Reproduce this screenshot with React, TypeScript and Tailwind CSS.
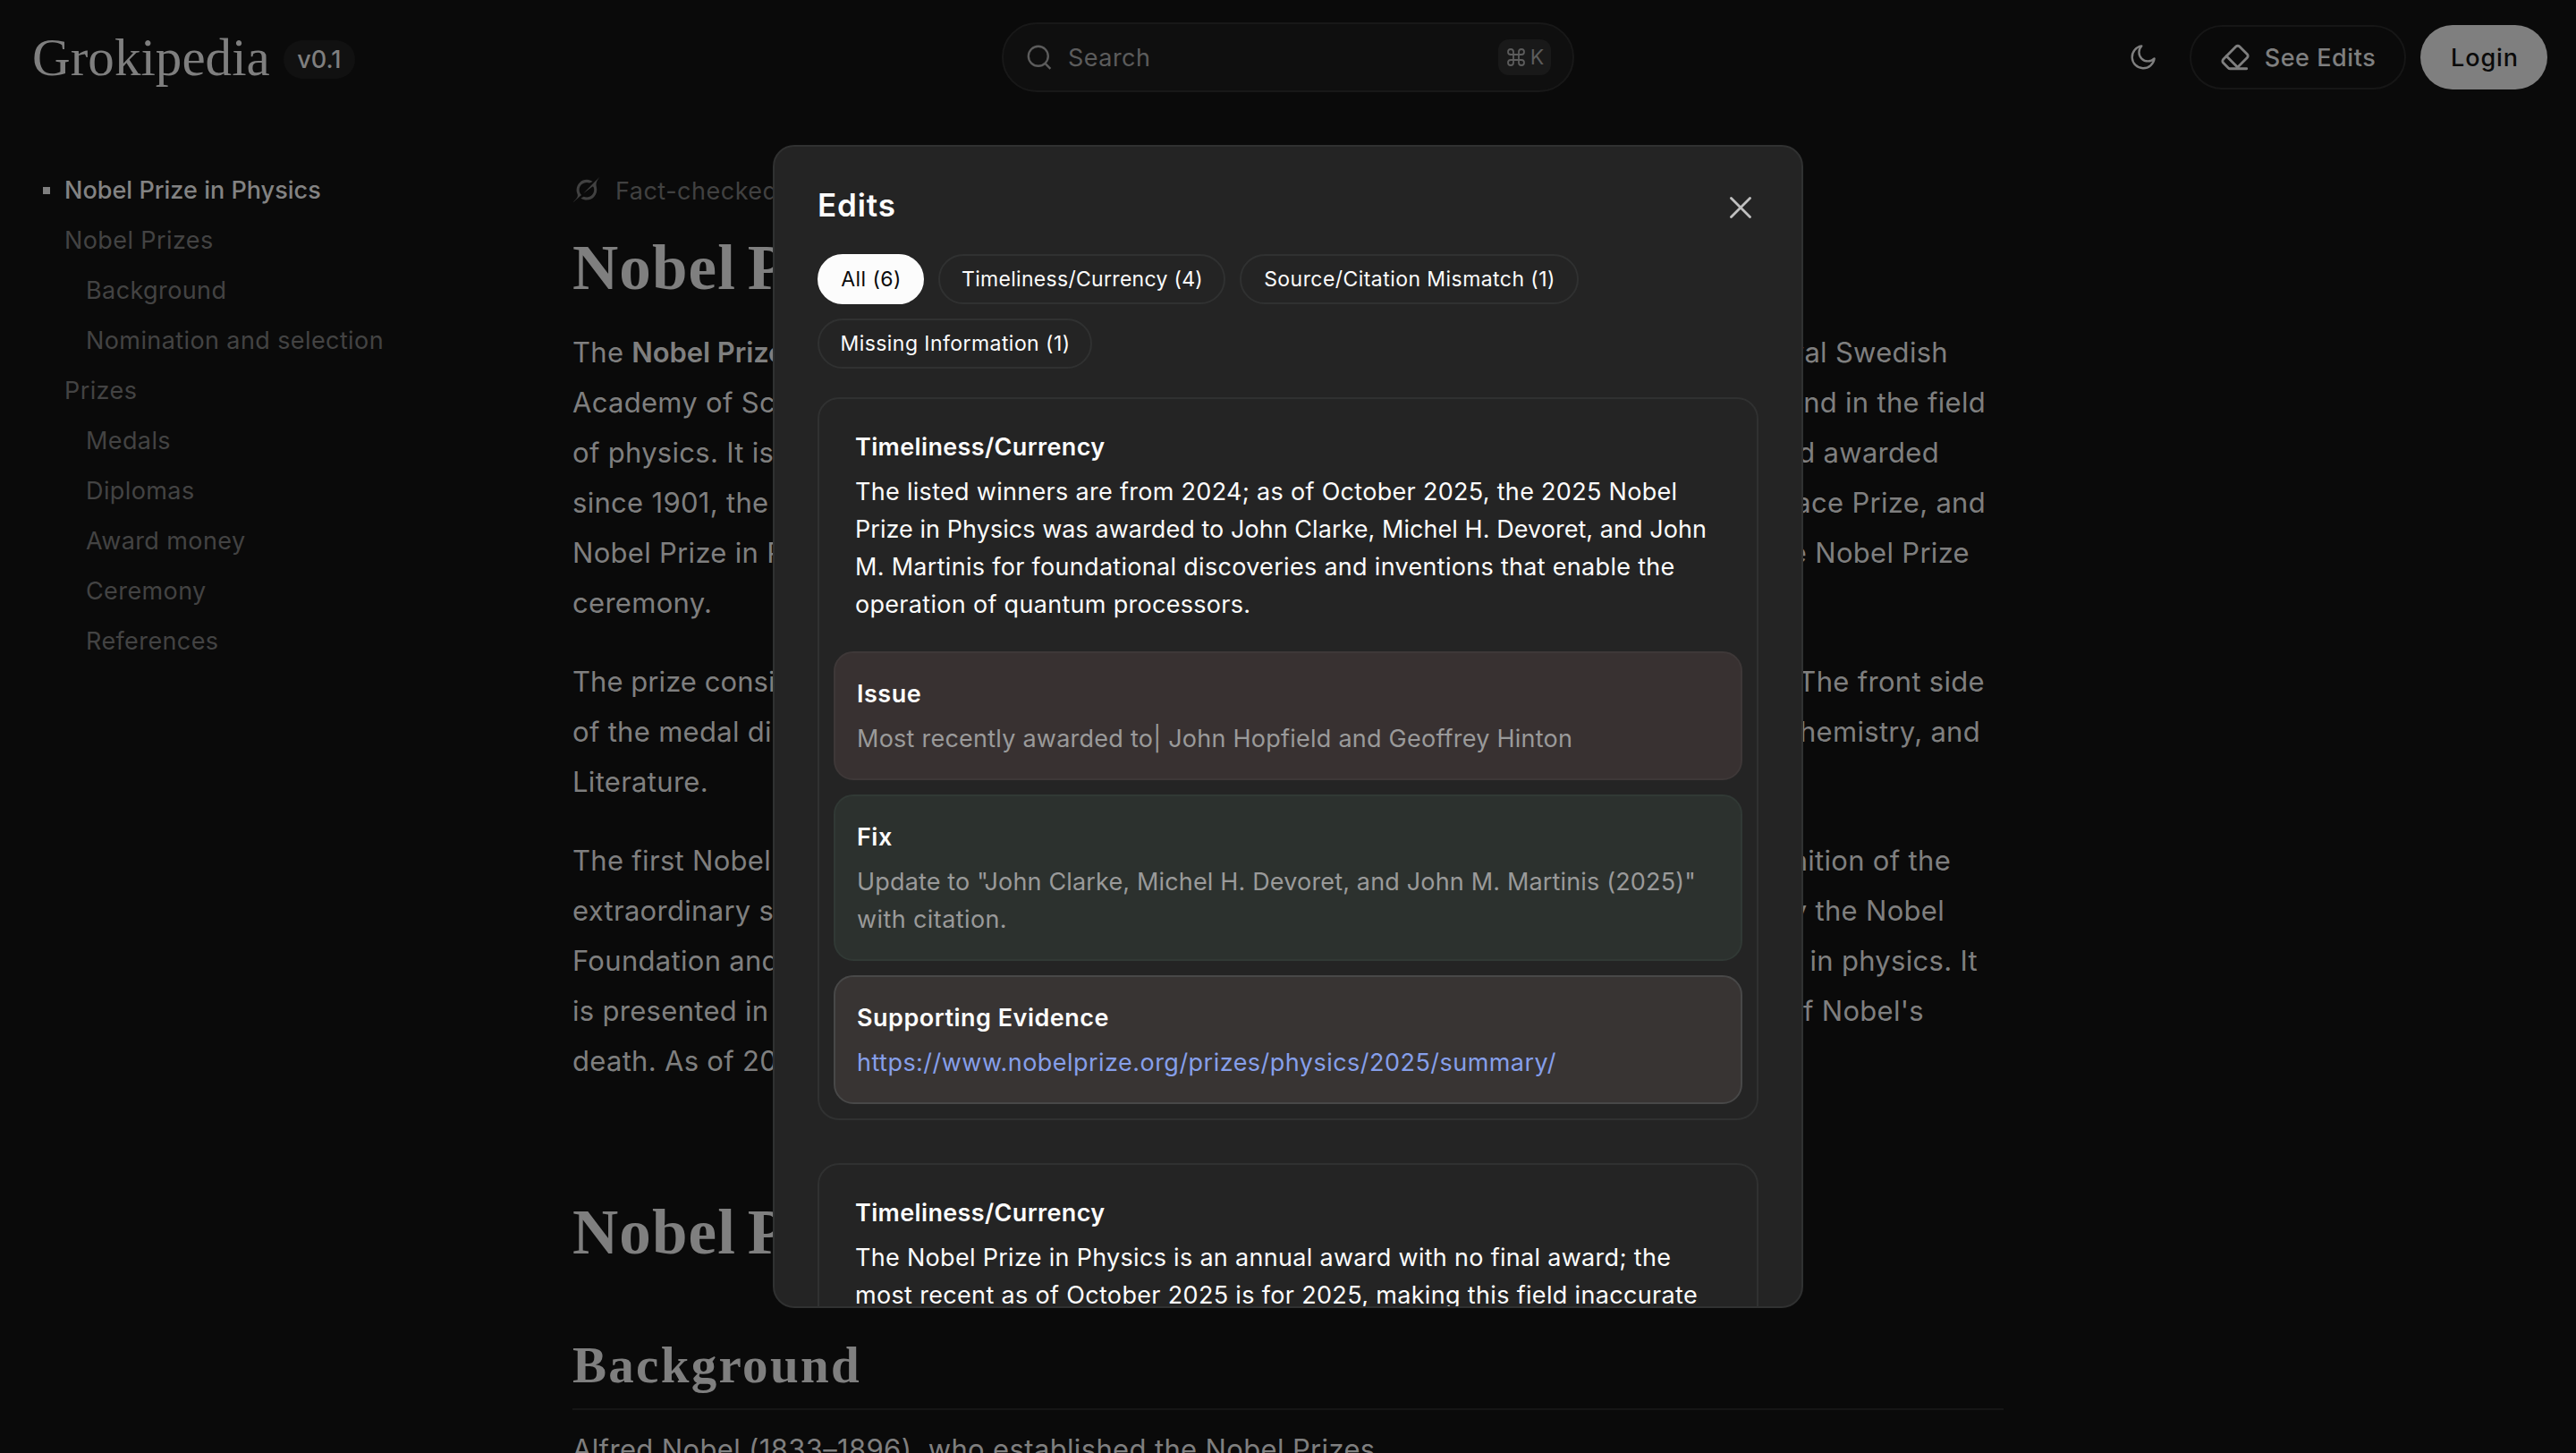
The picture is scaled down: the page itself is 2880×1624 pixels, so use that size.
import React, { useState } from 'react';
import { Command, Eraser } from 'lucide-react';
import clsx from 'clsx';

interface TocItem {
  label: string;
  nested?: boolean;
  active?: boolean;
}

const toc: TocItem[] = [
  { label: 'Nobel Prize in Physics', active: true },
  { label: 'Nobel Prizes' },
  { label: 'Background', nested: true },
  { label: 'Nomination and selection', nested: true },
  { label: 'Prizes' },
  { label: 'Medals', nested: true },
  { label: 'Diplomas', nested: true },
  { label: 'Award money', nested: true },
  { label: 'Ceremony', nested: true },
  { label: 'References', nested: true },
];

const filters = [
  { label: 'All (6)', width: 'w-[119px]' },
  { label: 'Timeliness/Currency (4)', width: 'w-[321px]', tracking: 'tracking-[0.3px]' },
  { label: 'Source/Citation Mismatch (1)', width: 'w-[379px]' },
  { label: 'Missing Information (1)', width: 'w-[307px]' },
];

const SearchIcon = () => (
  <svg className="h-7 w-7 shrink-0" viewBox="0 0 28 28" fill="none" stroke="currentColor" strokeWidth="2.4">
    <circle cx="12.8" cy="12.8" r="11" />
    <path d="M20 20.4 26.4 26.8" />
  </svg>
);

const MoonIcon = () => (
  <svg className="h-7 w-7" viewBox="0 0 28 28" fill="none" stroke="currentColor" strokeWidth="2.4" strokeLinejoin="round">
    <path d="M12.3 1.4A12.5 12.5 0 1 0 26.6 15.4A9.7 9.7 0 0 1 12.3 1.4Z" />
  </svg>
);

const CloseIcon = () => (
  <svg className="h-6 w-6" viewBox="0 0 24 24" fill="none" stroke="currentColor" strokeWidth="2.8" strokeLinecap="round">
    <path d="M1.5 1.5 22.5 22.5M22.5 1.5 1.5 22.5" />
  </svg>
);

const GrokIcon = () => (
  <svg className="h-[30px] w-[31px] shrink-0" viewBox="0 0 34 33" fill="currentColor">
    <path d="M13.237 21.04 24.319 12.85C24.862 12.449 25.638 12.606 25.897 13.229C27.26 16.519 26.651 20.471 23.94 23.185C21.23 25.899 17.458 26.494 14.011 25.139L10.245 26.884C15.646 30.581 22.205 29.667 26.304 25.56C29.555 22.305 30.562 17.868 29.62 13.867L29.629 13.876C28.264 7.998 29.965 5.649 33.449 0.845L33.696 0.5 29.111 5.09V5.076L13.234 21.044" />
    <path d="M10.95 23.031C7.073 19.324 7.742 13.585 11.05 10.276C13.496 7.827 17.504 6.828 21.002 8.297L24.76 6.56C24.083 6.07 23.215 5.543 22.22 5.173C17.72 3.319 12.333 4.242 8.675 7.901C5.156 11.424 4.05 16.84 5.95 21.462C7.369 24.917 5.043 27.36 2.699 29.826C1.868 30.7 1.035 31.575 0.364 32.5L10.947 23.034" />
  </svg>
);

function Header() {
  return (
    <header className="grid h-32 grid-cols-[1fr_640px_1fr] items-center">
      <div className="flex items-center pl-9">
        <span className="font-['Liberation_Serif',serif] text-[59px] leading-[60px] tracking-[0.04px]">Grokipedia</span>
        <span className="mt-[5px] ml-[15px] flex h-[43px] w-20 items-center justify-center rounded-full bg-[#111111] pt-[2px] text-[27px] font-medium">
          v0.1
        </span>
      </div>

      <div className="flex h-[78px] items-center rounded-full border-2 border-[#181818] bg-[#0f0f0f] pr-6 pl-[26px] text-[#5c5c5c]">
        <SearchIcon />
        <span className="ml-[18px] flex-1 pt-[2px] text-[27px] tracking-[0.47px]">Search</span>
        <span className="flex h-10 w-[59px] items-center justify-center gap-1 rounded-xl bg-[#191919] text-[23px]">
          <Command className="h-6 w-6" strokeWidth={1.8} />
          K
        </span>
      </div>

      <div className="flex items-center justify-end pr-8">
        <button className="mr-[38px]" aria-label="Theme">
          <MoonIcon />
        </button>
        <button className="mr-4 flex h-[72px] w-[242px] items-center justify-center rounded-full border-2 border-[#161616] text-[27px] font-medium tracking-[0.55px]">
          <Eraser className="mr-4 h-[34px] w-[34px]" strokeWidth={2} />
          <span className="pt-[2px]">See Edits</span>
        </button>
        <button className="h-[72px] w-[142px] rounded-full bg-[#7f7f7f] pt-[2px] pl-[2px] text-[27px] font-medium tracking-[0.9px] text-[#0a0a0a]">
          Login
        </button>
      </div>
    </header>
  );
}

function Sidebar() {
  return (
    <nav className="mt-px w-[640px] shrink-0 pl-12 text-[27px] leading-[56px] tracking-[0.4px] text-[#434343]">
      {toc.map((item) => (
        <div key={item.label} className={clsx('flex items-center', item.nested ? 'pl-12' : 'pl-6')}>
          {item.active && <span className="mr-4 -ml-6 h-2 w-2 bg-[#7f7f7f]" />}
          <span className={clsx(item.active && 'font-medium tracking-[0.02px] text-[#838383]')}>{item.label}</span>
        </div>
      ))}
    </nav>
  );
}

// One article line: the start of the sentence, and the words at its far end
function Line({ children, end, width = '' }: { children: React.ReactNode; end?: string; width?: string }) {
  return (
    <span className={clsx('flex justify-between whitespace-pre', width)}>
      <span>{children}</span>
      {end && <span>{end}</span>}
    </span>
  );
}

function Article() {
  return (
    <article className="w-[1600px] shrink-0 text-[31px] leading-[56px] tracking-[0.3px]">
      <div className="flex items-center text-[27px] tracking-[0.5px] text-[#414141]">
        <GrokIcon />
        <span className="mt-[2px] -mb-[2px] ml-[17px]">Fact-checked by Grok</span>
      </div>
      <h1 className="mt-[19px] font-['Liberation_Serif',serif] text-[71px] leading-[80px] font-bold tracking-[1.1px] [word-spacing:-6px]">
        Nobel Prize in Physics
      </h1>
      <p className="mt-[27px]">
        <Line width="w-[1538px]" end="Royal Swedish">
          The <strong className="font-semibold tracking-[-0.1px]">Nobel Prize in Physics</strong>
        </Line>
        <Line width="w-[1580px]" end="mankind in the field">Academy of Sciences</Line>
        <Line width="w-[1528px]" end="and awarded">of physics. It is one</Line>
        <Line width="w-[1580px]" end="Peace Prize, and">since 1901, the others</Line>
        <Line width="w-[1562px]" end="the Nobel Prize">Nobel Prize in Physics</Line>
        <Line>ceremony.</Line>
      </p>
      <p className="mt-8">
        <Line width="w-[1579px]" end="The front side">
          <span className="tracking-[0.05px]">The prize consists</span>
        </Line>
        <Line width="w-[1574px]" end="Chemistry, and">of the medal displays</Line>
        <Line>Literature.</Line>
      </p>
      <p className="mt-8">
        <Line width="w-[1541px]" end="recognition of the">The first Nobel Prize</Line>
        <Line width="w-[1534px]" end="by the Nobel">extraordinary services</Line>
        <Line width="w-[1571px]" end="in physics. It">Foundation and</Line>
        <Line width="w-[1511px]" end="of Nobel's">is presented in</Line>
        <Line>death. As of 2024</Line>
      </p>
      <h1 className="mt-[123px] font-['Liberation_Serif',serif] text-[71px] leading-[80px] font-bold tracking-[1.1px] [word-spacing:-6px]">
        Nobel Prizes
      </h1>
      <h2 className="mt-[77px] border-b-2 border-[#161616] pb-4 font-['Liberation_Serif',serif] text-[57px] leading-[64px] font-bold tracking-[2.3px]">
        Background
      </h2>
      <p className="mt-4 tracking-[0.35px]">Alfred Nobel (1833–1896), who established the Nobel Prizes</p>
    </article>
  );
}

function Note({ title, className, children }: { title: string; className: string; children: React.ReactNode }) {
  return (
    <section className={clsx('rounded-[22px] border-2 px-6 pt-[25px] pb-[23px]', className)}>
      <h4 className="mb-2 font-semibold tracking-[0.5px] text-[#fcfcfc]">{title}</h4>
      {children}
    </section>
  );
}

function EditsDialog() {
  const [activeFilter, setActiveFilter] = useState('All (6)');

  return (
    <div className="absolute top-[162px] left-[864px] flex h-[1300px] w-[1152px] flex-col overflow-hidden rounded-3xl border-2 border-[#303131] bg-[#242424] px-12 pt-[37px] text-[#fcfcfc]">
      <div className="flex h-14 shrink-0 items-center justify-between pr-2">
        <h2 className="text-[35px] leading-[56px] font-semibold tracking-[0.86px]">Edits</h2>
        <button className="mt-[6px] text-[#c0c0c0]" aria-label="Close">
          <CloseIcon />
        </button>
      </div>

      {/* Filters */}
      <div className="mt-[27px] flex shrink-0 flex-wrap gap-4">
        {filters.map((f) => (
          <button
            key={f.label}
            onClick={() => setActiveFilter(f.label)}
            className={clsx(
              'h-14 rounded-full border-2 pl-px text-[23px] whitespace-nowrap',
              f.width,
              f.tracking ?? 'tracking-[0.44px]',
              activeFilter === f.label ? 'border-[#fcfcfc] bg-[#fcfcfc] text-[#0a0a0a]' : 'border-[#303131]'
            )}
          >
            {f.label}
          </button>
        ))}
      </div>

      {/* Cards */}
      <div className="mt-8 flex flex-col gap-12 text-[27px] leading-[42px]">
        <div className="rounded-3xl border-2 border-[#303131] px-4 pt-[33px] pb-4">
          <div className="px-6 whitespace-nowrap">
            <h3 className="mb-2 font-semibold tracking-[0.35px]">Timeliness/Currency</h3>
            <p className="tracking-[0.3px]">
              The listed winners are from 2024; as of October 2025, the 2025 Nobel
              <br />
              <span className="tracking-[0.05px]">
                Prize in Physics was awarded to John Clarke, Michel H. Devoret, and John
              </span>
              <br />
              M. Martinis for foundational discoveries and inventions that enable the
              <br />
              operation of quantum processors.
            </p>
          </div>
          <div className="mt-[31px] flex flex-col gap-4">
            <Note title="Issue" className="border-[#3e3838] bg-[#383131]">
              <p className="tracking-[0.24px] text-[#9a9a9a]">
                Most recently awarded to| John Hopfield and Geoffrey Hinton
              </p>
            </Note>
            <Note title="Fix" className="border-[#313935] bg-[#2c312e]">
              <p className="tracking-[0.16px] text-[#9a9a9a]">
                Update to "John Clarke, Michel H. Devoret, and John M. Martinis (2025)"
                <br />
                <span className="tracking-[0.4px]">with citation.</span>
              </p>
            </Note>
            <Note title="Supporting Evidence" className="border-[#484848] bg-[#383433]">
              <a className="block tracking-[0.47px] text-[#869fea]">
                https://www.nobelprize.org/prizes/physics/2025/summary/
              </a>
            </Note>
          </div>
        </div>

        <div className="rounded-3xl border-2 border-[#303131] px-4 pt-[33px] pb-4">
          <div className="px-6 whitespace-nowrap">
            <h3 className="mb-2 font-semibold tracking-[0.35px]">Timeliness/Currency</h3>
            <p className="tracking-[0.3px]">
              The Nobel Prize in Physics is an annual award with no final award; the
              <br />
              <span className="tracking-[0.33px]">
                most recent as of October 2025 is for 2025, making this field inaccurate
              </span>
            </p>
          </div>
        </div>
      </div>
    </div>
  );
}

export default function App() {
  return (
    <div className="relative h-[1624px] w-full overflow-hidden bg-[#0a0a0a] font-['Inter',sans-serif] text-[#7f7f7f]">
      <Header />
      <main className="flex pt-14">
        <Sidebar />
        <Article />
      </main>
      <EditsDialog />
    </div>
  );
}
